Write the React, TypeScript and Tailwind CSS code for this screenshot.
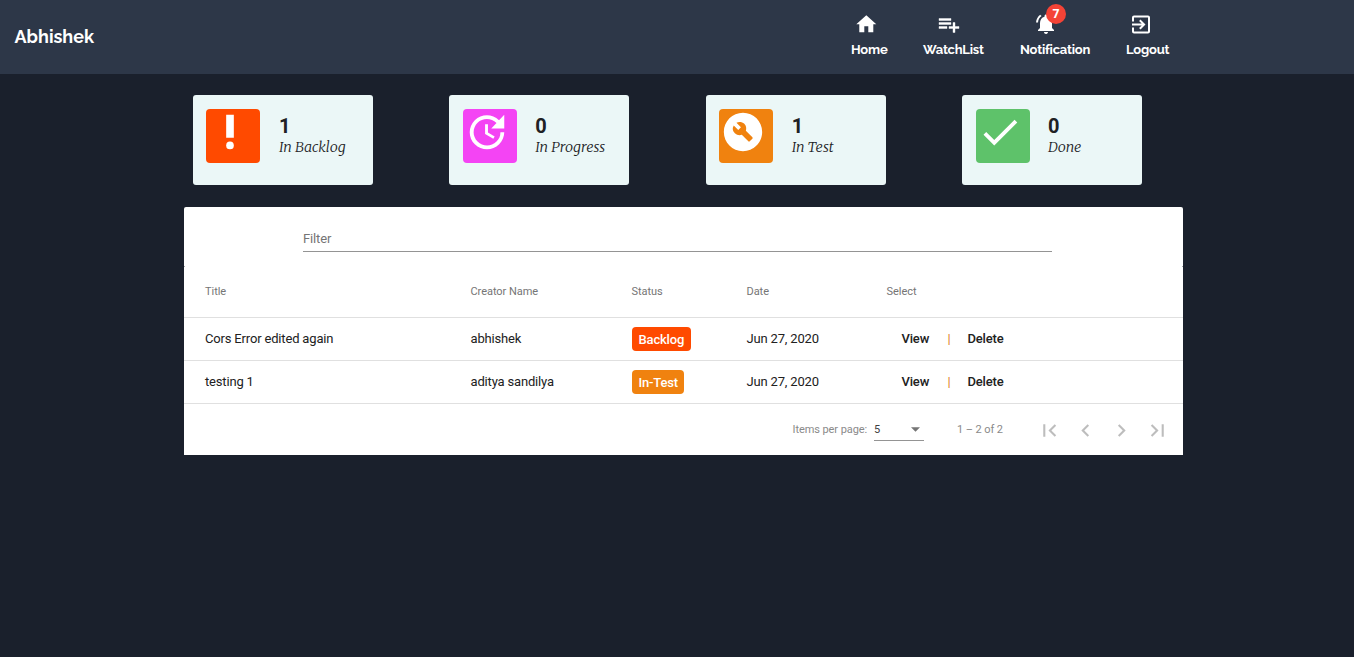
import type { ReactNode } from "react";
import type { IconType } from "react-icons";
import {
  MdBuildCircle,
  MdChevronLeft,
  MdChevronRight,
  MdDone,
  MdExitToApp,
  MdFirstPage,
  MdHome,
  MdLastPage,
  MdNotificationsActive,
  MdPriorityHigh,
  MdUpdate,
} from "react-icons/md";

function PlaylistAdd() {
  return (
    <svg viewBox="0 -0.5 24 24" className="size-6 fill-current stroke-current stroke-[0.4]">
      <path d="M14 10H2v2h12v-2zm0-4H2v2h12V6zm4 8v-4h-2v4h-4v2h4v4h2v-4h4v-2h-4zM2 16h8v-2H2v2z" />
    </svg>
  );
}

function NavItem({ icon, label, className, shift }: { icon: ReactNode; label: string; className: string; shift: string }) {
  return (
    <a className={`flex h-full flex-col pt-3 ${className}`}>
      <span className={`flex h-6 ${shift}`}>{icon}</span>
      <span className="mt-[5px] text-[13px] leading-[18px] font-bold tracking-[-0.22px] whitespace-nowrap">{label}</span>
    </a>
  );
}

function Header() {
  return (
    <header className="flex h-[74px] bg-[#2d3748] font-['Raleway','Lato',sans-serif] text-white">
      <div className="w-[851px] pt-[23px] pl-[14.5px] text-[18px] leading-[27px] font-bold">Abhishek</div>
      <NavItem className="w-[72px]" shift="pl-[3px]" label="Home" icon={<MdHome viewBox="-0.3 -0.3 24 24" className="size-6" />} />
      <NavItem className="w-[97px]" shift="pl-[14px]" label="WatchList" icon={<PlaylistAdd />} />
      <NavItem
        className="w-[106px]"
        shift="pl-[14px]"
        label="Notification"
        icon={
          <span className="relative size-6">
            <MdNotificationsActive className="size-6" />
            <span className="absolute -top-2 left-3 flex size-5 items-center justify-center rounded-full bg-[#f44336] font-['Open_Sans',sans-serif] text-[12px] font-bold">
              7
            </span>
          </span>
        }
      />
      <NavItem className="w-[60px]" shift="pl-[3px]" label="Logout" icon={<MdExitToApp viewBox="0 -0.5 24 24" className="size-6" />} />
    </header>
  );
}

const stats: { count: number; label: string; Icon: IconType; color: string; pad: string; gap: string }[] = [
  { count: 1, label: "In Backlog", Icon: MdPriorityHigh, color: "bg-[#ff4a00]", pad: "pl-[13px]", gap: "ml-[19px]" },
  { count: 0, label: "In Progress", Icon: MdUpdate, color: "bg-[#f444f4]", pad: "pl-[14px]", gap: "ml-[18px]" },
  { count: 1, label: "In Test", Icon: MdBuildCircle, color: "bg-[#f0820f]", pad: "pl-[13px]", gap: "ml-[19px]" },
  { count: 0, label: "Done", Icon: MdDone, color: "bg-[#5ec26a]", pad: "pl-[14px]", gap: "ml-[18px]" },
];

function Stats() {
  return (
    <section className="ml-[193px] flex w-[949px] justify-between pt-[21px]">
      {stats.map(({ count, label, Icon, color, pad, gap }) => (
        <div key={label} className={`flex h-[90px] w-[180px] rounded-[3px] bg-[#ebf7f7] pt-[14px] ${pad}`}>
          <div className={`size-[54px] shrink-0 rounded-[4px] pl-px text-white ${color}`}>
            <Icon className="size-[46px]" />
          </div>
          <div className={`text-[#202124] ${gap}`}>
            <div className="pt-[5px] font-['Roboto',sans-serif] text-[20px] leading-6 font-bold">{count}</div>
            <div className="-mt-[2px] font-['Merriweather','Liberation_Serif',serif] text-[14.3px] leading-[22px] font-light whitespace-nowrap italic">{label}</div>
          </div>
        </div>
      ))}
    </section>
  );
}

const columns = "grid grid-cols-[265.5px_161px_115px_140px_1fr] items-center border-b border-[#e0e0e0] pl-[21px]";

const rows = [
  { title: "Cors Error edited again", creator: "abhishek", status: "Backlog", color: "bg-[#ff4a00]", date: "Jun 27, 2020" },
  { title: "testing 1", creator: "aditya sandilya", status: "In-Test", color: "bg-[#f0820f]", date: "Jun 27, 2020" },
];

function Table() {
  return (
    <section className="mt-[22px] ml-[184px] w-[999px] font-['Roboto',sans-serif]">
      <div className="h-[60px] rounded-t-[2px] rounded-b-[1.5px] bg-white pt-[22px] pl-[119px]">
        <div className="h-[23px] w-[749px] border-b border-[#949494] text-[13px] leading-[19px] tracking-[-0.15px] text-[#757575]">Filter</div>
      </div>
      <div className="bg-white">
        <div className={`h-[51px] pt-px text-[11px] tracking-[-0.05px] text-[#757575] ${columns}`}>
          <span>Title</span>
          <span>Creator Name</span>
          <span>Status</span>
          <span>Date</span>
          <span>Select</span>
        </div>
        {rows.map((row) => (
          <div key={row.title} className={`h-[43px] text-[13px] tracking-[-0.17px] text-[#212121] ${columns}`}>
            <span>{row.title}</span>
            <span>{row.creator}</span>
            <span className={`-mt-px flex h-6 w-fit items-center rounded-[4px] pr-[6.5px] pl-[7px] pt-[2px] font-medium text-white ${row.color}`}>{row.status}</span>
            <span>{row.date}</span>
            <span className="flex pl-[15px] font-medium">
              <span className="w-[46px]">View</span>
              <span className="w-5 font-normal text-[#dd7a1f]">|</span>
              <span>Delete</span>
            </span>
          </div>
        ))}
        <div className="flex h-[51px] items-start text-[11px] leading-[13px] tracking-[-0.08px] text-[#8a8a8a]">
          <span className="ml-[608.5px] w-[81.5px] pt-[19px]">Items per page:</span>
          <span className="mt-[15px] flex h-[22px] w-[50px] items-center justify-between border-b border-[#949494] pr-[4px] text-[#404040]">
            5
            <svg viewBox="0 0 10 5" className="h-[5px] w-[9px] fill-[#757575]">
              <path d="M0 0h10L5 5z" />
            </svg>
          </span>
          <span className="ml-[33px] w-[80px] pt-[19px]">1 – 2 of 2</span>
          <span className="flex gap-[11px] pt-[14px] text-[#bdbdbd]">
            <MdFirstPage className="size-[25px]" />
            <MdChevronLeft className="size-[25px]" />
            <MdChevronRight className="size-[25px]" />
            <MdLastPage className="size-[25px]" />
          </span>
        </div>
      </div>
    </section>
  );
}

export default function App() {
  return (
    <div className="h-[657px] overflow-hidden bg-[#1a202c]">
      <Header />
      <Stats />
      <Table />
    </div>
  );
}
